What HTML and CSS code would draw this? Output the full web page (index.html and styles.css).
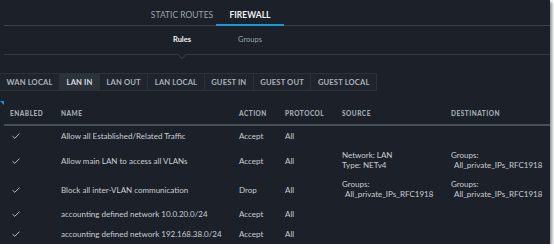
FILE: index.html
```html
<!DOCTYPE html>
<html>
<head>
<meta charset="utf-8">
<link rel="stylesheet" href="styles.css">
</head>
<body>
<div class="panel">
  <nav class="tabs">
    <div class="tab">STATIC ROUTES</div>
    <div class="tab active">FIREWALL</div>
  </nav>
  <nav class="subtabs">
    <div class="subtab active">Rules</div>
    <div class="subtab">Groups</div>
  </nav>
  <div class="btngroup">
    <div class="btn">WAN LOCAL</div>
    <div class="btn active">LAN IN</div>
    <div class="btn">LAN OUT</div>
    <div class="btn">LAN LOCAL</div>
    <div class="btn">GUEST IN</div>
    <div class="btn">GUEST OUT</div>
    <div class="btn">GUEST LOCAL</div>
  </div>
  <div class="tablewrap">
    <span class="corner"></span>
    <table class="rules">
      <thead>
        <tr>
          <th class="c-en">ENABLED</th>
          <th class="c-name">NAME</th>
          <th class="c-act">ACTION</th>
          <th class="c-proto">PROTOCOL</th>
          <th class="c-src">SOURCE</th>
          <th class="c-dst">DESTINATION</th>
        </tr>
      </thead>
      <tbody>
        <tr>
          <td><svg class="chk" width="8" height="6" viewBox="0 0 8 6"><polyline points="0.5,3.2 2.8,5.3 7.5,0.6"/></svg></td>
          <td>Allow all Established/Related Traffic</td>
          <td>Accept</td>
          <td>All</td>
          <td></td>
          <td></td>
        </tr>
        <tr>
          <td><svg class="chk" width="8" height="6" viewBox="0 0 8 6"><polyline points="0.5,3.2 2.8,5.3 7.5,0.6"/></svg></td>
          <td>Allow main LAN to access all VLANs</td>
          <td>Accept</td>
          <td>All</td>
          <td class="multi">Network: LAN<br>Type: NETv4</td>
          <td class="multi">Groups:<br><span class="ind">All_private_IPs_RFC1918</span></td>
        </tr>
        <tr>
          <td><svg class="chk" width="8" height="6" viewBox="0 0 8 6"><polyline points="0.5,3.2 2.8,5.3 7.5,0.6"/></svg></td>
          <td>Block all inter-VLAN communication</td>
          <td>Drop</td>
          <td>All</td>
          <td class="multi">Groups:<br><span class="ind">All_private_IPs_RFC1918</span></td>
          <td class="multi">Groups:<br><span class="ind">All_private_IPs_RFC1918</span></td>
        </tr>
        <tr>
          <td><svg class="chk" width="8" height="6" viewBox="0 0 8 6"><polyline points="0.5,3.2 2.8,5.3 7.5,0.6"/></svg></td>
          <td>accounting defined network 10.0.20.0/24</td>
          <td>Accept</td>
          <td>All</td>
          <td></td>
          <td></td>
        </tr>
        <tr>
          <td><svg class="chk" width="8" height="6" viewBox="0 0 8 6"><polyline points="0.5,3.2 2.8,5.3 7.5,0.6"/></svg></td>
          <td>accounting defined network 192.168.38.0/24</td>
          <td>Accept</td>
          <td>All</td>
          <td></td>
          <td></td>
        </tr>
      </tbody>
    </table>
  </div>
</div>
</body>
</html>
```

FILE: styles.css
```css
html, body {
  margin: 0;
  padding: 0;
  background: #ffffff;
}
body {
  font-family: Lato, "Open Sans", sans-serif;
  -webkit-font-smoothing: antialiased;
}
.panel {
  position: relative;
  width: 550px;
  height: 244px;
  background: #1c2129;
  box-shadow: 2px 2px 3px rgba(0, 0, 0, 0.45);
  overflow: hidden;
  color: #c9cdd3;
}
.tabs {
  display: flex;
  margin-left: 4px;
  padding-left: 144px;
  height: 26px;
  border-bottom: 1px solid #3a4048;
  box-sizing: border-box;
}
.tab {
  width: 68px;
  text-align: center;
  font-size: 8.5px;
  color: #9ca4ae;
  padding-top: 10px;
  box-sizing: border-box;
  height: 26px;
  white-space: nowrap;
}
.tab.active {
  color: #eef0f3;
  font-weight: bold;
  border-bottom: 2px solid #1a99d8;
}
.subtabs {
  position: relative;
  display: flex;
  margin-left: 4px;
  padding-left: 144px;
  height: 29px;
  border-bottom: 1px solid #343a42;
  box-sizing: border-box;
}
.subtab {
  width: 68px;
  text-align: center;
  font-size: 7.5px;
  color: #9aa2ac;
  padding-top: 9px;
  box-sizing: border-box;
}
.subtab.active {
  color: #f2f3f5;
  font-weight: bold;
  position: relative;
}
.subtab.active::after {
  content: "";
  position: absolute;
  left: 50%;
  bottom: -4px;
  width: 5px;
  height: 5px;
  margin-left: -3px;
  background: #1c2129;
  border-right: 1px solid #343a42;
  border-bottom: 1px solid #343a42;
  transform: rotate(45deg);
}
.btngroup {
  display: flex;
  margin: 18px 0 0 -1px;
  width: max-content;
  border: 1px solid #2c323a;
  background: #20252d;
}
.btn {
  height: 16px;
  line-height: 16px;
  padding: 0 6.5px;
  font-size: 7.6px;
  font-weight: bold;
  letter-spacing: 0.15px;
  color: #a9b1bb;
  border-right: 1px solid #2c323a;
  white-space: nowrap;
}
.btn:last-child {
  border-right: none;
}
.btn.active {
  background: #2c3239;
  color: #d8dce1;
}
.tablewrap {
  position: relative;
  margin-top: 13px;
}
.corner {
  position: absolute;
  left: 0;
  top: -3px;
  width: 0;
  height: 0;
  border-top: 4px solid #1f8fd1;
  border-left: 4px solid transparent;
}
.rules {
  margin-left: 4px;
  width: 546px;
  border-collapse: collapse;
  table-layout: fixed;
}
.rules th {
  text-align: left;
  font-size: 6.5px;
  font-weight: 900;
  letter-spacing: 0.5px;
  color: #a2abb5;
  padding: 6px 0 6px 6px;
  line-height: 8px;
  border-bottom: 2px solid #474e56;
}
.rules th.c-en { width: 45px; }
.rules th.c-name { width: 172px; }
.rules th.c-act { width: 40px; }
.rules th.c-proto { width: 51px; }
.rules th.c-src { width: 103px; }
.rules td {
  font-size: 8px;
  color: #c9cdd3;
  padding: 5px 0 5px 6px;
  line-height: 10px;
  vertical-align: middle;
  white-space: nowrap;
}
.rules td.multi {
  line-height: 9.5px;
}
.rules tbody tr:last-child td {
  border-bottom: 1px solid #3c424a;
}
.ind {
  padding-left: 3px;
}
.chk {
  display: block;
  margin-left: 2px;
  fill: none;
  stroke: #b7bcc3;
  stroke-width: 1;
}
```
